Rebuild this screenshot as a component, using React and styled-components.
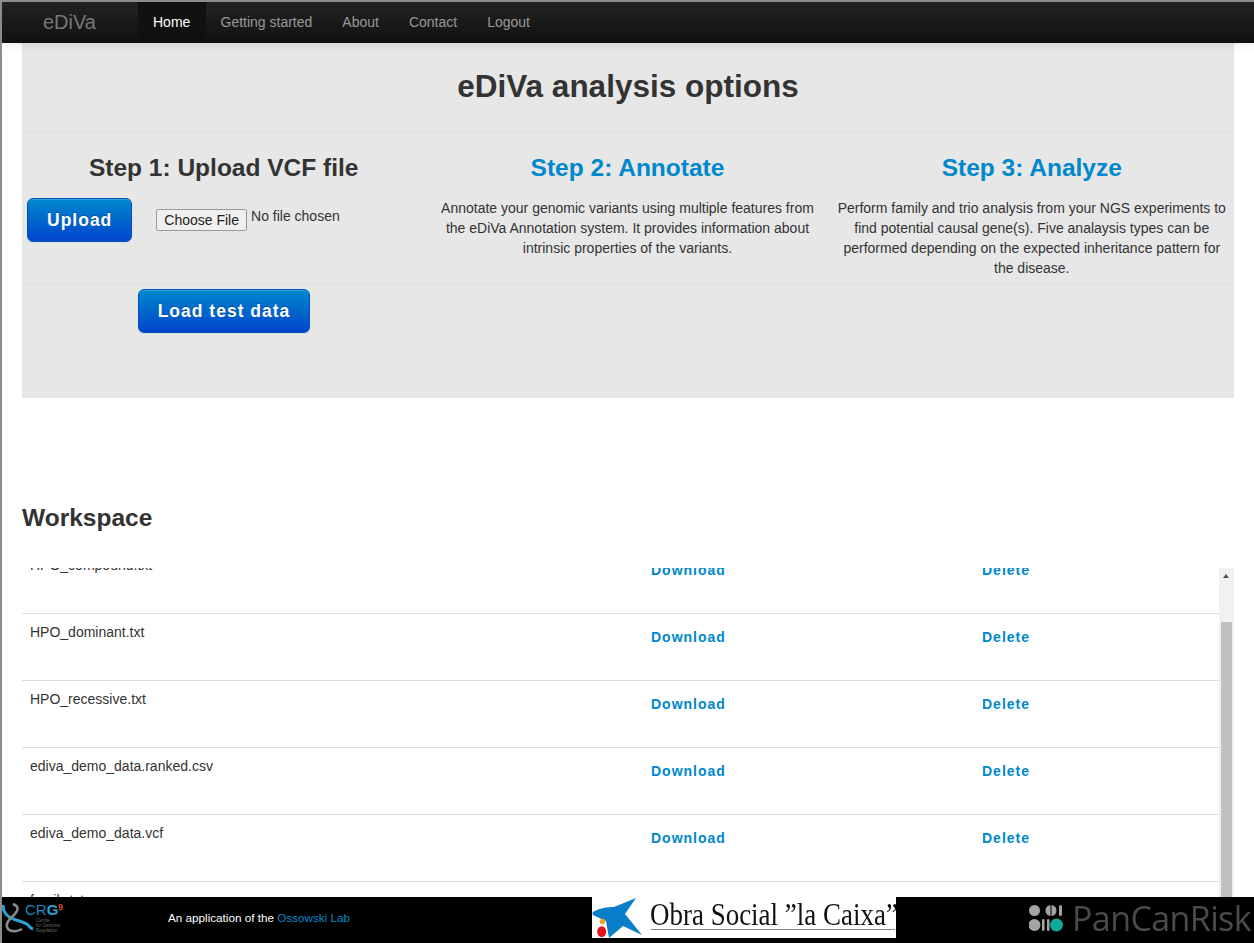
import React, { useLayoutEffect, useRef } from "react";
import styled, { createGlobalStyle } from "styled-components";

const Global = createGlobalStyle`
  html, body { margin: 0; height: 100%; overflow: hidden; background: #fff; }
  body { font-family: "Liberation Sans", Arial, sans-serif; font-size: 14px; line-height: 20px; color: #333; }
  * { box-sizing: border-box; }
`;

const Page = styled.div`
  height: 943px;
  overflow: hidden;
  border-left: 2px solid #8c8c8c;
  border-top: 2px solid #8c8c8c;
`;
const Navbar = styled.nav`
  height: 41px;
  display: flex;
  align-items: stretch;
  padding-left: 41px;
  background: linear-gradient(#222222, #111111);
  box-shadow: 0 1px 10px rgba(0, 0, 0, 0.1);
  position: relative;
  z-index: 2;
`;
const Brand = styled.a`
  width: 95px;
  font-size: 20px;
  color: #777;
  line-height: 40px;
`;
const NavItem = styled.a`
  padding: 0 15px;
  line-height: 40px;
  color: ${(p) => (p.$active ? "#fff" : "#999")};
  background: ${(p) => (p.$active ? "#111" : "transparent")};
  min-width: ${(p) => (p.$active ? "68px" : "0")};
  margin-right: ${(p) => (p.$active ? "-0.5px" : "0")};
`;
const Main = styled.main`
  padding: 0 20px;
`;
const Hero = styled.section`
  background: #e7e7e7;
  height: 355px;
`;
const HeroTitle = styled.h1`
  margin: 0;
  height: 90px;
  border-bottom: 1px solid #dfdfdf;
  font-size: 31.5px;
  line-height: 87px;
  font-weight: bold;
  text-align: center;
`;
const Steps = styled.div`
  display: grid;
  grid-template-columns: 403.4px 404.2px 404.4px;
  height: 151px;
  border-bottom: 1px solid #dfdfdf;
`;
const Step = styled.div`
  padding: 0 7px;
  text-align: center;
`;
const StepTitle = styled.h2`
  margin: 17px 0 12px;
  font-size: 24.5px;
  line-height: 36px;
  font-weight: bold;
  color: ${(p) => (p.$link ? "#0088cc" : "#333")};
`;
const StepText = styled.p`
  margin: 0;
`;
const UploadRow = styled.div`
  display: flex;
  align-items: flex-start;
  margin-left: -2px;
`;
const BlueButton = styled.button`
  height: 44px;
  padding: 0 19px;
  border: 1px solid #0055b8;
  border-radius: 6px;
  background: linear-gradient(#0088cc, #0044cc);
  color: #fff;
  font: bold 17.5px/24px "Liberation Sans", Arial, sans-serif;
  letter-spacing: 1px;
  text-shadow: 0 -1px 0 rgba(0, 0, 0, 0.25);
  box-shadow: inset 0 1px 0 rgba(255, 255, 255, 0.2), 0 1px 2px rgba(0, 0, 0, 0.05);
`;
const FileInput = styled.input`
  margin: 8px 0 0 24px;
  height: 28px;
  font: 14px/20px "Liberation Sans", Arial, sans-serif;
  color: #333;

  &::file-selector-button {
    vertical-align: -4px;
    height: 22px;
    padding: 1px 7px;
    background: #efefef;
    border: 1px solid #9a9a9a;
    border-radius: 2px;
    color: #222;
  }
`;
const LoadRow = styled.div`
  display: flex;
  justify-content: center;
  width: 404px;
  margin-top: 5px;
`;
const WorkspaceTitle = styled.h2`
  margin: 102px 0 32px;
  font-size: 24.5px;
  line-height: 36px;
  font-weight: bold;
`;
const ListFrame = styled.div`
  position: relative;
  height: 700px;
`;
const FileList = styled.div`
  height: 100%;
  margin-right: 15px;
  overflow: hidden;
`;
const ScrollTrack = styled.div`
  position: absolute;
  top: 0;
  right: 0;
  bottom: 0;
  width: 15px;
  background: #f1f1f1;
`;
const ScrollArrow = styled.div`
  position: absolute;
  top: 6px;
  left: 4px;
  border-left: 3.5px solid transparent;
  border-right: 3.5px solid transparent;
  border-bottom: 4px solid #505050;
`;
const ScrollThumb = styled.div`
  position: absolute;
  top: 54px;
  left: 2px;
  right: 2px;
  height: 306px;
  background: #c1c1c1;
`;
const Rows = styled.div`
  height: 1541px;
`;
const Row = styled.div`
  display: grid;
  grid-template-columns: 621px 331px 1fr;
  height: 67px;
  padding: 8px 0 0 8px;
  border-bottom: 1px solid #ddd;
`;
const FileAction = styled.a`
  margin-top: 5px;
  font-weight: bold;
  letter-spacing: 1px;
  color: #0088cc;
`;
const Footer = styled.footer`
  position: fixed;
  left: 2px;
  right: 0;
  bottom: 0;
  height: 46px;
  background: #000;
  display: grid;
  grid-template-columns: 166px 424px 437px 1fr;
  z-index: 3;
`;
const CrgLogo = styled.svg`
  width: 64px;
  height: 40px;
  margin-top: 5px;
`;
const Credit = styled.div`
  font-size: 11.7px;
  color: #fff;
  line-height: 42px;
`;
const CreditLink = styled.a`
  color: #0088cc;
`;
const CaixaBox = styled.div`
  width: 304px;
  height: 41px;
  background: #fff;
  display: flex;
  align-items: center;
  position: relative;
`;
const CaixaStar = styled.svg`
  width: 52px;
  height: 41px;
  flex: none;
`;
const CaixaName = styled.span`
  display: inline-block;
  font: 31px/36px "Liberation Serif", "Times New Roman", serif;
  color: #111;
  margin: -5px 0 0 6px;
  white-space: nowrap;
  transform: scaleX(0.87);
  transform-origin: left center;
`;
const CaixaRule = styled.div`
  position: absolute;
  left: 59px;
  right: 1px;
  bottom: 8px;
  height: 1px;
  background: #888;
`;
const PanCan = styled.div`
  display: flex;
  align-items: center;
  gap: 9px;
  height: 42px;
`;
const PanCanDots = styled.svg`
  width: 34px;
  height: 27px;
  flex: none;
`;
const PanCanName = styled.span`
  font: 34px/42px "Open Sans", "Liberation Sans", sans-serif;
  color: #4a4a4a;
  letter-spacing: -0.6px;
  white-space: nowrap;
`;

const files = [
  "HPO_all.txt",
  "HPO_compound.txt",
  "HPO_dominant.txt",
  "HPO_recessive.txt",
  "ediva_demo_data.ranked.csv",
  "ediva_demo_data.vcf",
  "family.txt",
];

export default function App() {
  const listRef = useRef(null);
  useLayoutEffect(() => {
    if (listRef.current) listRef.current.scrollTop = 88;
  }, []);
  return (
    <Page>
      <Global />
      <Navbar>
        <Brand>eDiVa</Brand>
        <NavItem $active>Home</NavItem>
        <NavItem>Getting started</NavItem>
        <NavItem>About</NavItem>
        <NavItem>Contact</NavItem>
        <NavItem>Logout</NavItem>
      </Navbar>
      <Main>
        <Hero>
          <HeroTitle>eDiVa analysis options</HeroTitle>
          <Steps>
            <Step>
              <StepTitle>Step 1: Upload VCF file</StepTitle>
              <UploadRow>
                <BlueButton>Upload</BlueButton>
                <FileInput type="file" />
              </UploadRow>
            </Step>
            <Step>
              <StepTitle $link>Step 2: Annotate</StepTitle>
              <StepText>
                Annotate your genomic variants using multiple features from the eDiVa Annotation system. It provides
                information about intrinsic properties of the variants.
              </StepText>
            </Step>
            <Step>
              <StepTitle $link>Step 3: Analyze</StepTitle>
              <StepText>
                Perform family and trio analysis from your NGS experiments to find potential causal gene(s). Five
                analaysis types can be performed depending on the expected inheritance pattern for the disease.
              </StepText>
            </Step>
          </Steps>
          <LoadRow>
            <BlueButton>Load test data</BlueButton>
          </LoadRow>
        </Hero>
        <WorkspaceTitle>Workspace</WorkspaceTitle>
        <ListFrame>
          <FileList ref={listRef}>
            <Rows>
              {files.map((name) => (
                <Row key={name}>
                  <span>{name}</span>
                  <FileAction>Download</FileAction>
                  <FileAction>Delete</FileAction>
                </Row>
              ))}
            </Rows>
          </FileList>
          <ScrollTrack>
            <ScrollArrow />
            <ScrollThumb />
          </ScrollTrack>
        </ListFrame>
      </Main>
      <Footer>
        <CrgLogo viewBox="0 0 64 40">
          <path d="M1 3 C1 10 4 13 9 16 C15 19 23 20 26 23 C28 25 28 26 31 27" fill="none" stroke="#29a3d8" strokeWidth="3" />
          <path d="M11 2 C18 5 16 9 11 14 C5 19 3 23 6 27 C9 30 15 30 20 27" fill="none" stroke="#8a8a8a" strokeWidth="2.5" />
          <text x="23" y="13" fontFamily="Liberation Sans" fontSize="15" fill="#1c86c0">
            CR<tspan fontWeight="bold" fill="#29a3d8">G</tspan>
          </text>
          <text x="56" y="8" fontFamily="Liberation Sans" fontSize="9" fontWeight="bold" fill="#d9472b">9</text>
          <text fontFamily="Liberation Sans" fontSize="4.5" fill="#666">
            <tspan x="34" y="20">Centre</tspan>
            <tspan x="34" y="25">for Genomic</tspan>
            <tspan x="34" y="30">Regulation</tspan>
          </text>
        </CrgLogo>
        <Credit>
          An application of the <CreditLink>Ossowski Lab</CreditLink>
        </Credit>
        <CaixaBox>
          <CaixaStar viewBox="0 0 52 41">
            <path
              d="M0.7 15 C8 11 15 10 22 10 L44 1 L33 17 L50 38 L31 29 L17 41 L14 24 L0.7 18 Z"
              fill="#0a7fc9"
            />
            <circle cx="10.5" cy="24.5" r="2.7" fill="#f2a51f" />
            <ellipse cx="9.7" cy="34.7" rx="4.5" ry="5.5" fill="#e3141c" />
          </CaixaStar>
          <CaixaName>Obra Social ”la Caixa”</CaixaName>
          <CaixaRule />
        </CaixaBox>
        <PanCan>
          <PanCanDots viewBox="0 0 34 27">
            <circle cx="5.5" cy="5.5" r="5.5" fill="#a3a3a3" />
            <circle cx="22" cy="5.5" r="5.5" fill="#a3a3a3" />
            <rect x="21.5" y="0" width="1" height="11" fill="#000" />
            <rect x="30" y="0" width="3" height="11" rx="1.5" fill="#a3a3a3" />
            <circle cx="5.5" cy="20" r="6" fill="#a3a3a3" />
            <rect x="13" y="14" width="2.5" height="12" rx="1.2" fill="#a3a3a3" />
            <rect x="18" y="14" width="2.5" height="12" rx="1.2" fill="#a3a3a3" />
            <circle cx="27.5" cy="20" r="6.5" fill="#11a898" />
          </PanCanDots>
          <PanCanName>PanCanRisk</PanCanName>
        </PanCan>
      </Footer>
    </Page>
  );
}
